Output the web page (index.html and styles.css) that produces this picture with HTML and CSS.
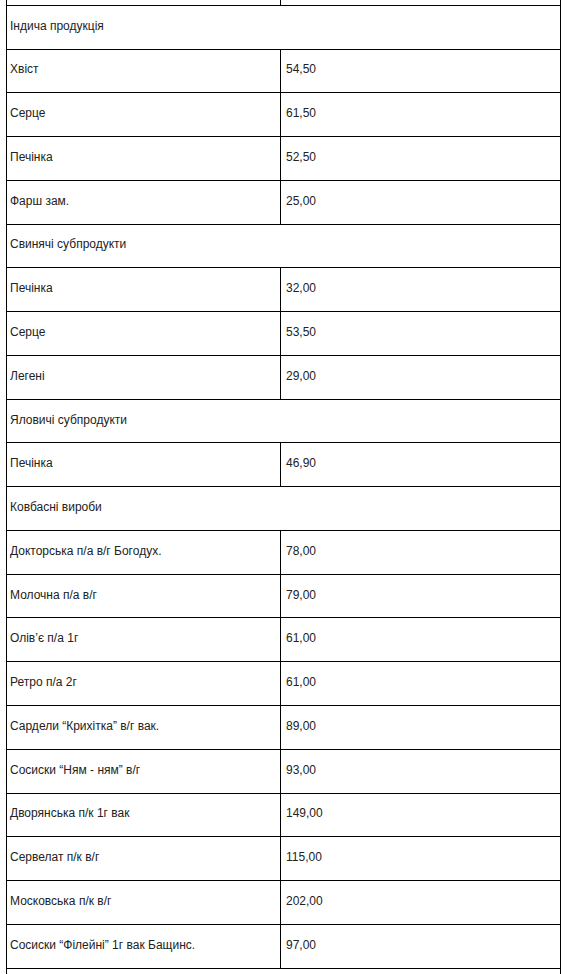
FILE: index.html
```html
<!DOCTYPE html>
<html lang="uk">
<head>
<meta charset="utf-8">
<link rel="stylesheet" href="styles.css">
</head>
<body>
<table class="price">
<tr><td class="name"></td><td class="val"></td></tr>
<tr><td class="cat" colspan="2">Індича продукція</td></tr>
<tr><td class="name">Хвіст</td><td class="val">54,50</td></tr>
<tr><td class="name">Серце</td><td class="val">61,50</td></tr>
<tr><td class="name">Печінка</td><td class="val">52,50</td></tr>
<tr><td class="name">Фарш зам.</td><td class="val">25,00</td></tr>
<tr><td class="cat" colspan="2">Свинячі субпродукти</td></tr>
<tr><td class="name">Печінка</td><td class="val">32,00</td></tr>
<tr><td class="name">Серце</td><td class="val">53,50</td></tr>
<tr><td class="name">Легені</td><td class="val">29,00</td></tr>
<tr><td class="cat" colspan="2">Яловичі субпродукти</td></tr>
<tr><td class="name">Печінка</td><td class="val">46,90</td></tr>
<tr><td class="cat" colspan="2">Ковбасні вироби</td></tr>
<tr><td class="name">Докторська п/а в/г Богодух.</td><td class="val">78,00</td></tr>
<tr><td class="name">Молочна п/а в/г</td><td class="val">79,00</td></tr>
<tr><td class="name">Олів’є п/а 1г</td><td class="val">61,00</td></tr>
<tr><td class="name">Ретро п/а 2г</td><td class="val">61,00</td></tr>
<tr><td class="name">Сардели “Крихітка” в/г вак.</td><td class="val">89,00</td></tr>
<tr><td class="name">Сосиски “Ням - ням” в/г</td><td class="val">93,00</td></tr>
<tr><td class="name">Дворянська п/к 1г вак</td><td class="val">149,00</td></tr>
<tr><td class="name">Сервелат п/к в/г</td><td class="val">115,00</td></tr>
<tr><td class="name">Московська п/к в/г</td><td class="val">202,00</td></tr>
<tr><td class="name">Сосиски “Філейні” 1г вак Бащинс.</td><td class="val">97,00</td></tr>
<tr><td class="cat" colspan="2">&nbsp;</td></tr>
</table>
</body>
</html>
```
FILE: styles.css
```css
html, body {
  margin: 0;
  padding: 0;
  background: #fff;
}
body {
  font-family: "Liberation Sans", Arial, sans-serif;
  font-size: 12px;
  color: #222;
  overflow: hidden;
}
.price {
  border-collapse: collapse;
  margin: -39px 0 0 6px;
  width: 555px;
  table-layout: fixed;
}
.price td {
  border: 1px solid #000;
  height: 43.77px;
  box-sizing: border-box;
  padding: 0 4px 3px 3px;
  vertical-align: middle;
  line-height: 14px;
}
.price .name {
  width: 274px;
}
.price .val {
  padding-left: 5px;
}
```
